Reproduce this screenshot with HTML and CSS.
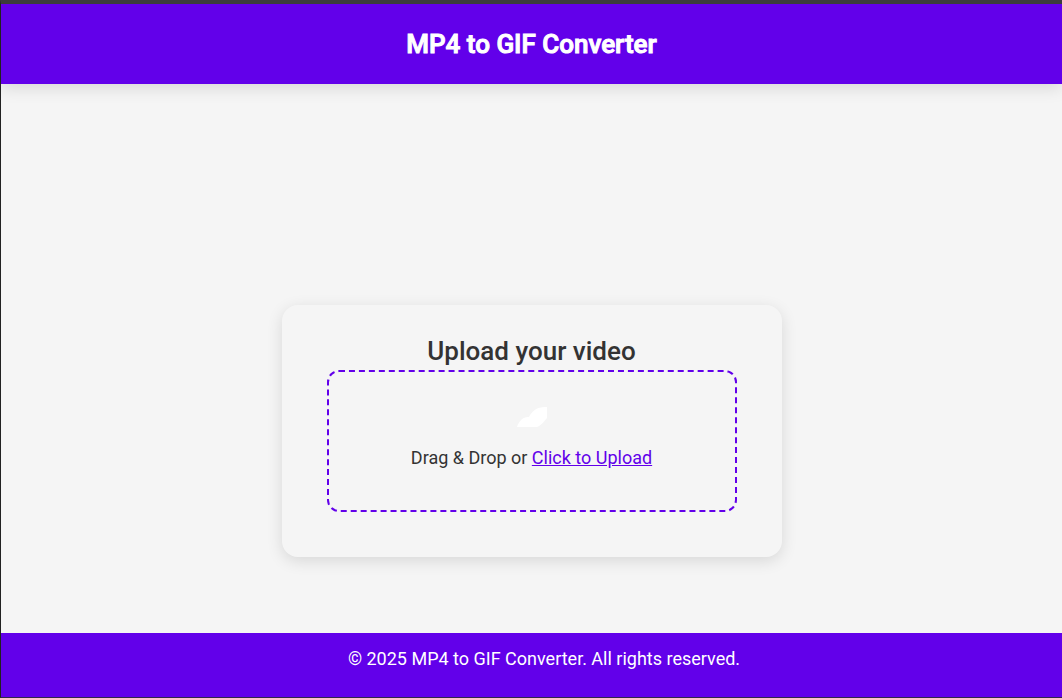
FILE: index.html
```html
<!DOCTYPE html>
<html lang="en">
<head>
<meta charset="utf-8">
<meta name="viewport" content="width=device-width, initial-scale=1">
<title>MP4 to GIF Converter</title>
<link rel="stylesheet" href="styles.css">
</head>
<body>
<header class="app-header">
  <h1 class="app-title">MP4 to GIF Converter</h1>
</header>
<main class="content">
  <section class="card">
    <h2 class="card-title">Upload your video</h2>
    <div class="dropzone">
      <svg class="upload-icon" viewBox="0 0 30 20" aria-hidden="true">
        <path d="M0 20C2 14 6 10 11 10H12C15 4 20 0 28 0H30V11C27 14 25 18 20 20Z" fill="#fff"/>
      </svg>
      <p class="drop-text">Drag &amp; Drop or <a class="upload-link" href="#">Click to Upload</a></p>
    </div>
  </section>
</main>
<footer class="app-footer">
  <p class="copyright">© 2025 MP4 to GIF Converter. All rights reserved.</p>
</footer>
</body>
</html>
```
FILE: styles.css
```css
* {
  box-sizing: border-box;
  margin: 0;
}

body {
  display: flex;
  flex-direction: column;
  min-height: 100vh;
  border: solid #3c3c3c;
  border-width: 4px 0 1px 1px;
  border-left-color: #222;
  border-bottom-color: #30264a;
  background: #f5f5f5;
  color: #333;
  font: 18px/28px Roboto, sans-serif;
}

.app-header {
  padding: 24px;
  background: #6200ea;
  color: #fff;
  text-align: center;
  box-shadow: 0 4px 16px rgba(0, 0, 0, 0.12);
}

.app-title {
  font-size: 26px;
  font-weight: 500;
  line-height: 32px;
  -webkit-text-stroke: 1px #fff;
}

.content {
  flex: 1;
  display: flex;
  flex-direction: column;
  justify-content: flex-end;
  align-items: center;
  padding: 24px 24px 76px;
}

.card {
  width: 100%;
  max-width: 500px;
  padding: 28px 45px 45px;
  border-radius: 16px;
  box-shadow: 0 4px 16px rgba(0, 0, 0, 0.12);
  text-align: center;
}

.card-title {
  padding-bottom: 1px;
  font-size: 26px;
  font-weight: 500;
  line-height: 36px;
}

.dropzone {
  display: flex;
  flex-direction: column;
  align-items: center;
  gap: 17px;
  padding: 35px 24px 38px;
  border: 2px dashed #6200ea;
  border-radius: 12px;
}

.upload-icon {
  width: 30px;
  height: 20px;
}

.upload-link {
  color: #6200ea;
}

.app-footer {
  padding: 12px 0 24px 25px;
  background: #6200ea;
  color: #fff;
  text-align: center;
}
```
